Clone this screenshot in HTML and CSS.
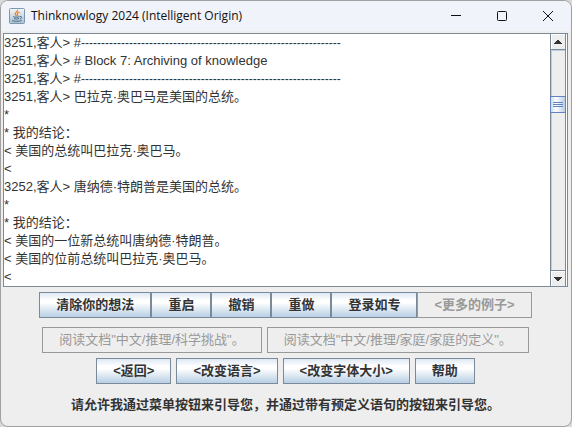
FILE: index.html
```html
<!DOCTYPE html>
<html lang="zh-CN">
<head>
<meta charset="utf-8">
<title>Thinknowlogy 2024 (Intelligent Origin)</title>
<link rel="stylesheet" href="styles.css">
</head>
<body>
<div class="window">
  <header class="titlebar">
    <svg class="app-icon" width="16" height="16" viewBox="0 0 16 16" aria-hidden="true">
      <defs><linearGradient id="tile" x1="0" y1="0" x2="0" y2="1"><stop offset="0" stop-color="#f4f7f9"/><stop offset="1" stop-color="#a9bfcf"/></linearGradient></defs>
      <rect x=".5" y=".5" width="15" height="15" rx="1" fill="url(#tile)" stroke="#7d98ac"/>
      <path d="M8.6 1.8C9.6 3.6 5.4 4.4 6.2 6.2C6.5 7 7.3 7.4 7.4 8.2M10.8 4C8.8 4.8 7.6 5.6 8.5 6.8C8.9 7.4 8.7 8 8.2 8.4" fill="none" stroke="#ee8026" stroke-width="1.2"/>
      <path d="M4.2 8.6C5.6 9.4 9.4 9.3 10.6 8.7M5 10.5C6.4 11.1 8.8 11.1 10 10.5M11 8.6C13.4 8 13 10.6 11 11M3 12.2C4 13.6 11.4 13.5 12.6 12.3" fill="none" stroke="#3f6a8c"/>
    </svg>
    <h1 class="title">Thinknowlogy 2024 (Intelligent Origin)</h1>
    <div class="controls">
      <button class="control" aria-label="Minimize"><svg width="10" height="10" viewBox="0 0 10 10"><path d="M0 4.5H10"/></svg></button>
      <button class="control" aria-label="Maximize"><svg width="10" height="10" viewBox="0 0 10 10"><rect x=".5" y=".5" width="9" height="9" rx="1"/></svg></button>
      <button class="control" aria-label="Close"><svg width="10" height="10" viewBox="0 0 10 10"><path d="M0 0L10 10M10 0L0 10"/></svg></button>
    </div>
  </header>
  <main class="content">
    <section class="console">
      <pre class="log">3251,客人&gt; #<span class="rule">-----------------------------------------------------------------</span>
3251,客人&gt; # Block 7: Archiving of knowledge
3251,客人&gt; #<span class="rule">-----------------------------------------------------------------</span>
3251,客人&gt; 巴拉克·奥巴马是美国的总统。
*
* 我的结论：
&lt; 美国的总统叫巴拉克·奥巴马。
&lt;
3252,客人&gt; 唐纳德·特朗普是美国的总统。
*
* 我的结论：
&lt; 美国的一位新总统叫唐纳德·特朗普。
&lt; 美国的位前总统叫巴拉克·奥巴马。
&lt;</pre>
      <div class="scrollbar">
        <button class="arrow arrow-up" aria-label="向上滚动"><svg width="8" height="4" viewBox="0 0 8 4"><path d="M0 4V3H1V2H2V1H3V0H5V1H6V2H7V3H8V4Z"/></svg></button>
        <div class="track"><div class="space-above"></div><div class="thumb"><i></i><i></i><i></i></div></div>
        <button class="arrow arrow-down" aria-label="向下滚动"><svg width="8" height="4" viewBox="0 0 8 4"><path d="M0 0V1H1V2H2V3H3V4H5V3H6V2H7V1H8V0Z"/></svg></button>
      </div>
    </section>
    <div class="row joined">
      <button class="button">清除你的想法</button><button class="button">重启</button><button class="button">撤销</button><button class="button">重做</button><button class="button">登录如专</button><button class="button" disabled>&lt;更多的例子&gt;</button>
    </div>
    <div class="row examples">
      <button class="button" disabled>阅读文档"中文/推理/科学挑战"。</button>
      <button class="button" disabled>阅读文档"中文/推理/家庭/家庭的定义"。</button>
    </div>
    <div class="row">
      <button class="button">&lt;返回&gt;</button>
      <button class="button">&lt;改变语言&gt;</button>
      <button class="button">&lt;改变字体大小&gt;</button>
      <button class="button">帮助</button>
    </div>
    <p class="hint">请允许我通过菜单按钮来引导您，并通过带有预定义语句的按钮来引导您。</p>
  </main>
</div>
</body>
</html>
```
FILE: styles.css
```css
* {
  box-sizing: border-box;
}

body {
  margin: 0;
  background: #d8d8d8;
  color: #333;
  font: 13px/18px "Liberation Sans", "Noto Sans CJK SC", sans-serif;
}

button {
  margin: 0;
  padding: 0;
  border: 0;
  color: inherit;
  font: inherit;
}

.window {
  display: flex;
  flex-direction: column;
  min-height: 100vh;
  border: 1px solid #a0a0a0;
  border-radius: 8px;
  background: #eee;
  overflow: hidden;
}

.titlebar {
  display: flex;
  align-items: center;
  height: 30px;
  padding-left: 8px;
  background: #f0f3fa;
  color: #111;
}

.title {
  flex: 1;
  margin: 0 0 0 6px;
  font: 12px/16px "Open Sans", "Noto Sans", sans-serif;
}

.controls {
  display: flex;
}

.control {
  display: grid;
  place-items: center;
  width: 46px;
  height: 30px;
  background: none;
}

.control svg {
  fill: none;
  stroke: #111;
}

.content {
  display: flex;
  flex: 1;
  flex-direction: column;
  padding: 2px 3px 0 2px;
}

.console {
  display: flex;
  border: 1px solid #7a8a99;
  background: #fff;
}

.log {
  flex: 1;
  min-width: 0;
  margin: 0;
  font: inherit;
  overflow: hidden;
}

.rule {
  font-size: 12px;
  line-height: 1;
}

.scrollbar {
  display: flex;
  flex-direction: column;
  width: 16px;
  margin-right: 1px;
  border: 1px solid #7a8a99;
  border-width: 0 1px;
  background: #eee;
}

.arrow {
  display: grid;
  place-items: center;
  height: 16px;
  background: #eee;
  box-shadow: inset 1px 1px #fff;
  fill: #333;
}

.arrow-up {
  border-bottom: 1px solid #7a8a99;
}

.arrow-down {
  border-top: 1px solid #7a8a99;
}

.track {
  display: flex;
  flex: 1;
  flex-direction: column;
  box-shadow: inset 1px 1px #b8cfe5;
}

.space-above {
  flex: 0 0 21%;
}

.thumb {
  display: flex;
  flex-direction: column;
  align-items: center;
  justify-content: center;
  gap: 1px;
  height: 17px;
  margin: 0 -1px;
  border: 1px solid #6382bf;
  background: linear-gradient(90deg, #c8ddf2, #fff 35%, #b8cfe5);
}

.thumb i {
  width: 10px;
  height: 1px;
  background: #6382bf;
}

.row {
  display: flex;
  justify-content: center;
  gap: 5px;
  padding-top: 5px;
}

.joined {
  gap: 0;
}

.examples {
  padding-top: 9px;
}

.button {
  height: 26px;
  padding: 0 16px;
  border: 1px solid #7a8a99;
  background: linear-gradient(#dde8f3, #fff 30%, #fff 40%, #b8cfe5);
  font-weight: bold;
  white-space: nowrap;
}

.button:disabled {
  border-color: #999;
  background: #eee;
  color: #999;
}

.examples .button {
  font-weight: normal;
}

.hint {
  margin: 12px 0 0;
  font-weight: bold;
  text-align: center;
}
```
